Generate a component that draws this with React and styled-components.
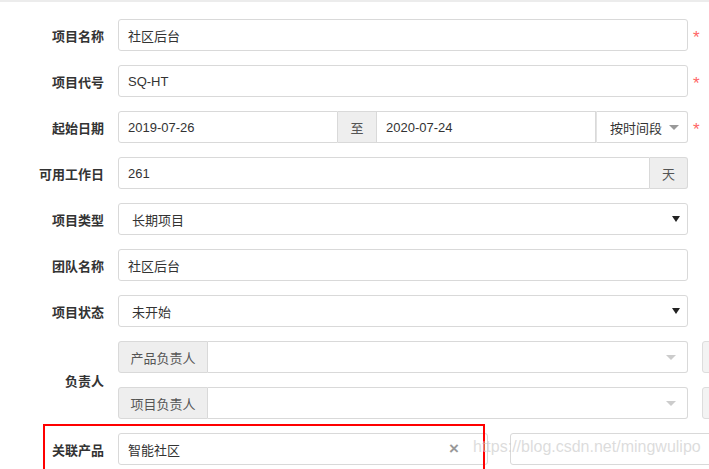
import React from 'react'
import styled, { createGlobalStyle } from 'styled-components'

const GlobalStyle = createGlobalStyle`
  html, body {
    margin: 0;
    padding: 0;
    background: #fff;
  }
  body {
    font-family: "Liberation Sans", "Noto Sans CJK SC", sans-serif;
    font-size: 13px;
    color: #333;
  }
`;

export default function App() {
  return (
    <Page>
      <GlobalStyle />
      <TopBar />
      <Form>
        <Row>
          <Label>项目名称</Label>
          <Control>
            <Input>社区后台</Input>
          </Control>
          <Star>*</Star>
        </Row>
        <Row>
          <Label>项目代号</Label>
          <Control>
            <Input>SQ-HT</Input>
          </Control>
          <Star>*</Star>
        </Row>
        <Row>
          <Label>起始日期</Label>
          <Control>
            <Input grow join="left">2019-07-26</Input>
            <Addon w={38}>至</Addon>
            <Input grow join="right">2020-07-24</Input>
            <DropBtn>
              按时间段
              <Caret color="#999" />
            </DropBtn>
          </Control>
          <Star>*</Star>
        </Row>
        <Row>
          <Label>可用工作日</Label>
          <Control>
            <Input grow join="left">261</Input>
            <Addon w={38} last>天</Addon>
          </Control>
        </Row>
        <Row>
          <Label>项目类型</Label>
          <Control>
            <Select>
              长期项目
              <Caret color="#222" small />
            </Select>
          </Control>
        </Row>
        <Row>
          <Label>团队名称</Label>
          <Control>
            <Input>社区后台</Input>
          </Control>
        </Row>
        <Row>
          <Label>项目状态</Label>
          <Control>
            <Select>
              未开始
              <Caret color="#222" small />
            </Select>
          </Control>
        </Row>
        <GroupRow>
          <Label>负责人</Label>
          <Stack>
            <SubRow>
              <Control>
                <Addon w={90} first>产品负责人</Addon>
                <Select join>
                  <span />
                  <Caret color="#ccc" />
                </Select>
              </Control>
              <SideBox />
            </SubRow>
            <SubRow>
              <Control>
                <Addon w={90} first>项目负责人</Addon>
                <Select join>
                  <span />
                  <Caret color="#ccc" />
                </Select>
              </Control>
              <SideBox />
            </SubRow>
          </Stack>
        </GroupRow>
        <Row>
          <Label>关联产品</Label>
          <ShortControl>
            <Input>
              智能社区
              <Clear>×</Clear>
            </Input>
          </ShortControl>
          <FarInput />
          <Highlight />
          <Watermark>https://blog.csdn.net/mingwulipo</Watermark>
        </Row>
      </Form>
    </Page>
  )
}

const Page = styled.div`
  width: 709px;
  height: 469px;
  overflow: hidden;
  position: relative;
`;

const TopBar = styled.div`
  height: 2px;
  background: #ececec;
`;

const Form = styled.div`
  padding-top: 17px;
  display: flex;
  flex-direction: column;
  gap: 14px;
`;

const Row = styled.div`
  position: relative;
  display: flex;
  align-items: center;
  height: 32px;
`;

const GroupRow = styled.div`
  display: flex;
  align-items: center;
`;

const Stack = styled.div`
  display: flex;
  flex-direction: column;
  gap: 14px;
`;

const SubRow = styled.div`
  display: flex;
  align-items: center;
  height: 32px;
`;

const Label = styled.div`
  width: 104px;
  margin-right: 14px;
  flex: none;
  text-align: right;
  font-weight: bold;
  font-size: 13px;
  color: #333;
`;

const Control = styled.div`
  width: 570px;
  height: 32px;
  display: flex;
  flex: none;
`;

const ShortControl = styled(Control)`
  width: 370px;
`;

const Input = styled.div`
  position: relative;
  flex: 1;
  min-width: 0;
  box-sizing: border-box;
  height: 32px;
  padding: 0 9px;
  display: flex;
  align-items: center;
  border: 1px solid #d9d9d9;
  border-radius: ${p => (p.join === 'left' ? '3px 0 0 3px' : p.join === 'right' ? '0' : '3px')};
  font-size: 13px;
  color: #333;
  background: #fff;
`;

const Addon = styled.div`
  width: ${p => p.w}px;
  flex: none;
  box-sizing: border-box;
  height: 32px;
  display: flex;
  align-items: center;
  justify-content: center;
  background: #eee;
  border: 1px solid #d9d9d9;
  border-left: ${p => (p.first ? '1px solid #d9d9d9' : 'none')};
  border-right: ${p => (p.last || p.first ? '1px solid #d9d9d9' : 'none')};
  border-radius: ${p => (p.last ? '0 3px 3px 0' : p.first ? '3px 0 0 3px' : '0')};
  font-size: 13px;
  color: #555;
`;

const DropBtn = styled.div`
  width: 92px;
  flex: none;
  box-sizing: border-box;
  height: 32px;
  display: flex;
  align-items: center;
  padding-left: 13px;
  gap: 7px;
  border: 1px solid #d9d9d9;
  border-left: 1px solid #e3e3e3;
  border-radius: 0 3px 3px 0;
  font-size: 13px;
  color: #333;
`;

const Select = styled.div`
  flex: 1;
  box-sizing: border-box;
  height: 32px;
  display: flex;
  align-items: center;
  justify-content: space-between;
  padding: 0 7px 0 13px;
  border: 1px solid #d9d9d9;
  border-left: ${p => (p.join ? 'none' : '1px solid #d9d9d9')};
  border-radius: ${p => (p.join ? '0 3px 3px 0' : '3px')};
  font-size: 13px;
  color: #333;
`;

const Caret = styled.span`
  width: 0;
  height: 0;
  border-left: ${p => (p.small ? 4 : 5)}px solid transparent;
  border-right: ${p => (p.small ? 4 : 5)}px solid transparent;
  border-top: ${p => (p.small ? 6 : 5)}px solid ${p => p.color};
  margin-right: ${p => (p.small ? 0 : 4)}px;
`;

const Star = styled.span`
  margin-left: 5px;
  color: #f66;
  font-size: 17px;
  line-height: 1;
  padding-top: 4px;
`;

const SideBox = styled.div`
  margin-left: 14px;
  width: 30px;
  height: 32px;
  box-sizing: border-box;
  flex: none;
  background: #f3f3f3;
  border: 1px solid #ddd;
  border-radius: 3px 0 0 3px;
`;

const Clear = styled.span`
  position: absolute;
  right: 28px;
  top: 6px;
  color: #999;
  font-size: 17px;
  font-weight: bold;
  line-height: 1;
`;

const FarInput = styled.div`
  margin-left: 22px;
  width: 260px;
  flex: none;
  height: 32px;
  box-sizing: border-box;
  border: 1px solid #d9d9d9;
  border-radius: 3px;
`;

const Highlight = styled.div`
  position: absolute;
  left: 43px;
  top: -9px;
  width: 442px;
  height: 60px;
  box-sizing: border-box;
  border: 2px solid #f00;
  pointer-events: none;
`;

const Watermark = styled.span`
  position: absolute;
  left: 473px;
  top: 5px;
  font-family: "Liberation Sans", sans-serif;
  font-size: 16px;
  color: rgba(205, 205, 205, 0.7);
  white-space: nowrap;
  pointer-events: none;
`;
